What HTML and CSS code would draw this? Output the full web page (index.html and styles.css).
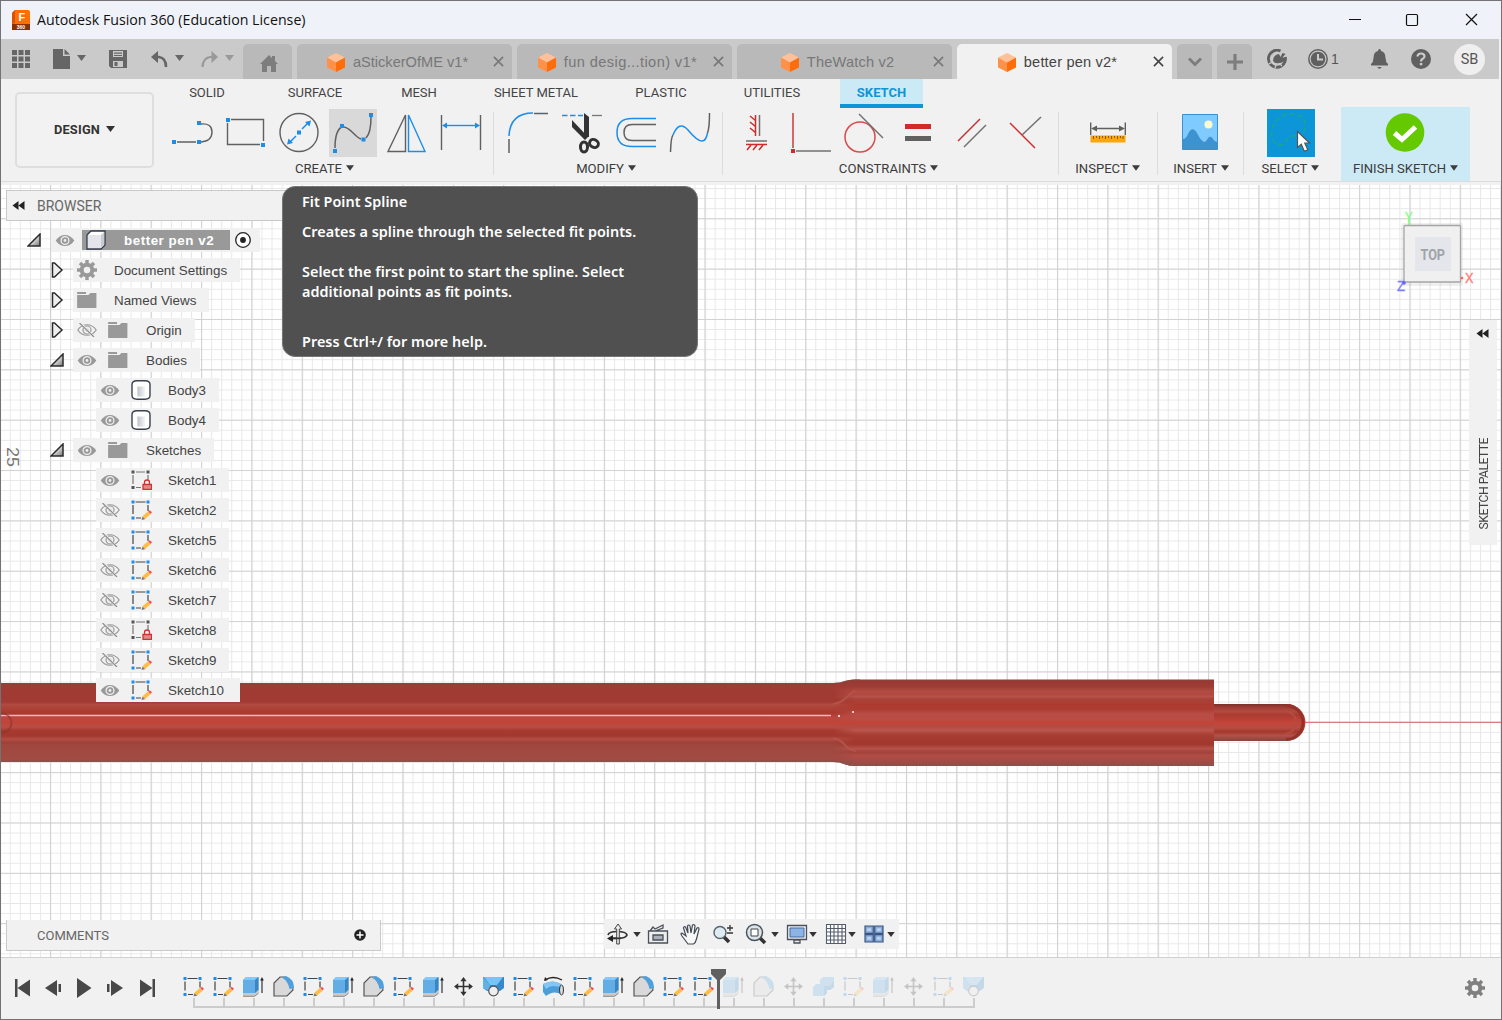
FILE: index.html
```html
<!DOCTYPE html>
<html lang="en">
<head>
<meta charset="utf-8">
<title>Autodesk Fusion 360 (Education License)</title>
<link rel="stylesheet" href="styles.css">
</head>
<body>
<svg class="defs" width="0" height="0">
  <defs>
    <linearGradient id="gTri" x1="0" y1="0" x2="1" y2="1"><stop offset=".3" stop-color="#fff"/><stop offset="1" stop-color="#777"/></linearGradient>
    <linearGradient id="gCyl" x1="0" x2="1" y1="0" y2="0"><stop offset="0" stop-color="#fff"/><stop offset=".1" stop-color="#c3c6d0"/><stop offset="1" stop-color="#f6f6f8"/></linearGradient>
  </defs>
  <symbol id="caret" viewBox="0 0 9 6"><path d="M0 0h9L4.500 6z" fill="currentColor"/></symbol>
  <symbol id="cube" viewBox="0 0 18 19"><path d="M9 0l9 4.500L9 9.500 0 4.500z" fill="#ffc09a"/><path d="M0 4.500l9 5V19l-9-4.500z" fill="#ff9148"/><path d="M18 4.500l-9 5V19l9-4.500z" fill="#ff6c0a"/></symbol>
  <symbol id="close" viewBox="0 0 12 12"><path d="M1 1l10 10M11 1L1 11" stroke="currentColor" stroke-width="1.700" fill="none"/></symbol>
  <symbol id="eye" viewBox="0 0 20 14"><path d="M0 7C5-1 15-1 20 7 15 15 5 15 0 7z" fill="#999"/><circle cx="10" cy="7" r="4.200" fill="none" stroke="#eee" stroke-width="1.400"/><circle cx="10" cy="7" r="1.500" fill="#eee"/></symbol>
  <symbol id="eyeoff" viewBox="0 0 20 14"><path d="M.8 7C5.500 0 14.500 0 19.200 7 14.500 14 5.500 14 .8 7z" fill="none" stroke="#999" stroke-width="1.200"/><circle cx="10" cy="7" r="4" fill="none" stroke="#999" stroke-width="1.200"/><circle cx="10" cy="7" r="1.500" fill="#999"/><path d="M3.500 0l13 14" stroke="#eee" stroke-width="2.400"/><path d="M2.500 0l14.500 14" stroke="#888" stroke-width="1.100"/></symbol>
  <symbol id="folder" viewBox="0 0 21 17"><path d="M0 0h9.500v2H0zM0 3.200h12l2-2.200h6.500v16H0z" fill="#999"/></symbol>
  <symbol id="gear" viewBox="0 0 20 20"><circle cx="10" cy="10" r="5.300" fill="none" stroke="currentColor" stroke-width="4"/><g stroke="currentColor" stroke-width="3.400"><path d="M10 0v4M10 16v4M0 10h4M16 10h4M3 3l2.800 2.800M14.200 14.200L17 17M17 3l-2.800 2.800M5.800 14.200L3 17"/></g></symbol>
  <symbol id="open" viewBox="0 0 14 14"><path d="M13 1v12H1z" fill="url(#gTri)" stroke="#2c2c2c" stroke-width="1.500"/></symbol>
  <symbol id="shut" viewBox="0 0 12 16"><path d="M1.500 1h2L11 8l-7.500 7h-2z" fill="#eee" stroke="#2c2c2c" stroke-width="1.500"/></symbol>
  <symbol id="body" viewBox="0 0 20 20"><path d="M1 4.500Q1 1 6 .8h8q5 .2 5 3.700v11q0 3.500-5 3.700H6q-5-.2-5-3.700z" fill="#fff" stroke="#3b414d" stroke-width="1.400"/><path d="M6 6.500h8v10H6z" fill="url(#gCyl)"/></symbol>
  <symbol id="sketch" viewBox="0 0 21 20"><path d="M4.500 2h10M2 5v9M17 5v6M5 18h5" stroke="#444" stroke-width="1.200" fill="none"/><path d="M0.500.5h3v3h-3zM15.500.5h3v3h-3zM.5 16.500h3v3h-3z" fill="#1c8eea"/><path d="M10.500 20l1-3.500 3 2.600z" fill="#777"/><path d="M11.500 16.300l5.300-4.700 2.700 2.600-5.500 4.700z" fill="#ffbe43"/><path d="M17.200 11.600l1.600-1.400 2.200 2-1.600 1.900z" fill="#fb4b55"/></symbol>
  <symbol id="locked" viewBox="0 0 21 20"><path d="M5 2h9M2 5v9M17 5v5M5 17.500h5" stroke="#777" stroke-width="1.200" fill="none"/><path d="M.5.500h3v3h-3zM15.500.500h3v3h-3zM.5 16h3v3h-3z" fill="#555"/><path d="M13.500 14v-1.500a2.500 2.500 0 0 1 5 0V14" fill="none" stroke="#cf3434" stroke-width="1.300"/><path d="M12 14.500h8.500v5H12z" fill="#e58a8a" stroke="#cf3434" stroke-width="1.300"/></symbol>
  <symbol id="extrude" viewBox="0 0 21 21"><path d="M0 17v3h12l4-3.500v-3z" fill="#c9c9c9"/><path d="M0 20.300h11.500l4-3" fill="none" stroke="#888"/><path d="M0 4l3-3h12.500v12.500L12 17H0z" fill="#63ade6"/><path d="M0 4l3-3h12.500L12 4z" fill="#86c8f8"/><path d="M12 4l3.500-3v12.500L12 17z" fill="#3687c4"/><path d="M19 3v14" stroke="#222" stroke-width="1.100"/><path d="M17.200 4.500L19 1l1.800 3.500z" fill="#222"/></symbol>
  <symbol id="fillet" viewBox="0 0 21 21"><path d="M1 20V7l6-6h5q8 3 8 13l-6 6z" fill="#d9d9d9" stroke="#555" stroke-width="1.200"/><path d="M9 1.500l4-1.500q8 3 8 12l-4.500 1Q15.500 5.500 9 1.500z" fill="#4fa0df"/></symbol>
  <symbol id="move" viewBox="0 0 20 20"><path d="M10 3v14M3 10h14" stroke="#333" stroke-width="1.500" fill="none"/><path d="M10 1l3 4H7zM10 19l-3-4h6zM1 10l4-3v6zM19 10l-4 3V7z" fill="#333"/></symbol>
  <symbol id="loft" viewBox="0 0 21 21"><path d="M0 1h21v11l-4 3H4l-4-3z" fill="#3789c7"/><path d="M1 1h19l-6 8H7z" fill="#7bc3f5"/><path d="M0 1l7 8-1 6-6-3z" fill="#65b0e7"/><circle cx="10.500" cy="15" r="4.800" fill="#eee" stroke="#555" stroke-width="1.200"/></symbol>
  <symbol id="revolve" viewBox="0 0 21 21"><path d="M2 4q8-5 17 0" fill="none" stroke="#222" stroke-width="1.300"/><path d="M1 5l1-4 3 3z" fill="#222"/><path d="M0 8q10-5 18 0v10q-8-4-15 2L0 16z" fill="#4c9eda"/><path d="M0 8q10-5 18 0l-2 3Q8 8 3 13z" fill="#83c6f5"/><ellipse cx="18.500" cy="14" rx="2" ry="5" fill="#ddd" stroke="#333"/></symbol>
  <symbol id="combine" viewBox="0 0 21 21"><path d="M0 11l3-3h4V4l3-3h11v10l-4 3h-3v3l-3 3H0z" fill="#63ade6"/><path d="M11 10h6l4-5v6l-4 3h-3v3l-3 3z" fill="#3b8dcc"/></symbol>
  <symbol id="rewind" viewBox="0 0 12 9"><path d="M6 0v9L0 4.500zM12 0v9L6 4.500z" fill="#222"/></symbol>
</svg>

<div class="window">
  <header class="titlebar">
    <svg class="applogo" width="18" height="20" viewBox="0 0 18 20"><path d="M3 0h13q2 0 2 2v18H0V3z" fill="#ff6d05"/><path d="M0 3l3-3v13l-3 1z" fill="#d65300"/><path d="M0 14h18v6H0z" fill="#8d3000"/><text x="6.500" y="11" font-size="11" font-weight="700" fill="#fff">F</text><text x="4.800" y="19" font-size="5" font-weight="700" fill="#fff">360</text></svg>
    <span class="apptitle">Autodesk Fusion 360 (Education License)</span>
    <svg class="winctl" width="132" height="14" viewBox="0 0 132 14" fill="none" stroke="#111" stroke-width="1.200"><path d="M2 6.500h12M119 1l11 11M130 1l-11 11"/><rect x="59.500" y="1.500" width="11" height="11" rx="1.200"/></svg>
  </header>

  <div class="appbar">
    <div class="quick">
      <svg width="18" height="18" viewBox="0 0 18 18" fill="#666"><path d="M0 0h5v5H0zM6.500 0h5v5h-5zM13 0h5v5h-5zM0 6.500h5v5H0zM6.500 6.500h5v5h-5zM13 6.500h5v5h-5zM0 13h5v5H0zM6.500 13h5v5h-5zM13 13h5v5h-5z"/></svg>
      <svg class="qfile" width="17" height="20" viewBox="0 0 17 20" fill="#666"><path d="M0 0h10v7h7v13H0zM11.500 0L17 5.500h-5.500z"/></svg>
      <svg class="qc" width="9" height="6"><use href="#caret"/></svg>
      <svg class="qsave" width="18" height="18" viewBox="0 0 18 18"><path d="M0 0h18v18H2l-2-2z" fill="#666"/><path d="M4 1h10v6H4zM4 11h10v6H4z" fill="#cacaca"/><path d="M5 2.500h8v1.200H5zM5 5h8v1H5zM5.500 12h3v4h-3z" fill="#666"/></svg>
      <svg class="qundo" width="17" height="17" viewBox="0 0 17 17"><path d="M3 6h5q7 1 7 10" fill="none" stroke="#666" stroke-width="2.600"/><path d="M0 6l7-6v12z" fill="#666"/></svg>
      <svg class="qc" width="9" height="6"><use href="#caret"/></svg>
      <svg class="qredo" width="17" height="17" viewBox="0 0 17 17"><path d="M14 6H9Q2 7 1.500 16" fill="none" stroke="#999" stroke-width="2.200"/><path d="M17 6l-6.500-6v12z" fill="#999"/></svg>
      <svg class="qc dim" width="9" height="6"><use href="#caret"/></svg>
    </div>
    <div class="tabs">
      <div class="tab home"><svg width="18" height="17" viewBox="0 0 18 17"><path d="M9 0l3 3V1h3v5l3 3h-2v8h-5v-6H7v6H2V9H0z" fill="#7d7d7d"/></svg></div>
      <div class="tab"><span class="tname"><svg width="18" height="19"><use href="#cube"/></svg><b>aStickerOfME v1*</b></span><svg width="11" height="11"><use href="#close"/></svg></div>
      <div class="tab"><span class="tname"><svg width="18" height="19"><use href="#cube"/></svg><b class="wide">fun desig...tion) v1*</b></span><svg width="11" height="11"><use href="#close"/></svg></div>
      <div class="tab"><span class="tname"><svg width="18" height="19"><use href="#cube"/></svg><b class="mid">TheWatch v2</b></span><svg width="11" height="11"><use href="#close"/></svg></div>
      <div class="tab active"><span class="tname"><svg width="18" height="19"><use href="#cube"/></svg><b class="mid">better pen v2*</b></span><svg width="11" height="11"><use href="#close"/></svg></div>
      <div class="tab small"><svg width="16" height="10" viewBox="0 0 16 10"><path d="M2 1.500l6 6 6-6" fill="none" stroke="#7d7d7d" stroke-width="3"/></svg></div>
      <div class="tab small"><svg width="16" height="16" viewBox="0 0 16 16"><path d="M8 0v16M0 8h16" stroke="#7d7d7d" stroke-width="3.200"/></svg></div>
    </div>
    <div class="account">
      <svg width="20" height="20" viewBox="0 0 20 20"><path d="M13.500 2A8.500 8.500 0 1 0 18.300 8" fill="none" stroke="#606060" stroke-width="2.800"/><path d="M2 15l3-2M8 19l1-3M15 17l-2-2" stroke="#cacaca" stroke-width="1.300"/><path d="M6 12q0-6 6-7l1.500 3 2-4 3 1-3 3.500 3.500.5q-2 5-7 5-4 1-6-2z" fill="#606060"/></svg>
      <svg class="aclock" width="20" height="20" viewBox="0 0 20 20"><circle cx="10" cy="10" r="9.200" fill="none" stroke="#606060" stroke-width="1.500"/><circle cx="10" cy="10" r="7.300" fill="#606060"/><path d="M10 5v5.500h5" fill="none" stroke="#ccc" stroke-width="2"/></svg>
      <span class="jobs">1</span>
      <svg class="abell" width="17" height="20" viewBox="0 0 17 20"><path d="M8.500 0q1.500 0 1.500 2 4.500 1 4.500 7 0 4 2.500 6v1.500H0V15q2.500-2 2.500-6 0-6 4.500-7 0-2 1.500-2zM6 18h5l-2.500 2z" fill="#606060"/></svg>
      <svg class="ahelp" width="20" height="20" viewBox="0 0 20 20"><circle cx="10" cy="10" r="10" fill="#606060"/><path d="M6.500 7.500q.3-3 3.500-3t3.500 2.700q0 1.600-1.800 2.600Q10 10.800 10 12.500" fill="none" stroke="#ccc" stroke-width="2.200"/><path d="M8.800 14h2.500v2.300H8.800z" fill="#ccc"/></svg>
      <span class="avatar">SB</span>
    </div>
  </div>

  <div class="ribbon">
    <button class="workspace">DESIGN <svg width="9" height="6"><use href="#caret"/></svg></button>
    <div class="ribmain">
      <nav class="rtabs"><span class="w82">SOLID</span><span class="w134">SURFACE</span><span class="w74">MESH</span><span class="w160">SHEET METAL</span><span class="w90">PLASTIC</span><span class="w132">UTILITIES</span><span class="current">SKETCH</span></nav>
      <div class="groups">
        <section class="group create">
          <div class="icons">
            <svg width="48" height="48" viewBox="0 0 48 48"><g fill="none" stroke="#606060" stroke-width="1.400"><path d="M10 33h19M34 33q11-1 11-10T34 15"/></g><path d="M5 31h4v4H5zM30 31h4v4h-4zM30 12h4v4h-4z" fill="#1c8eea"/></svg>
            <svg width="48" height="48" viewBox="0 0 48 48"><path d="M6.500 14v21.500H39M42.500 32V10.500H10" fill="none" stroke="#606060" stroke-width="1.400"/><path d="M5 9h4v4H5zM40 34h4v4h-4z" fill="#1c8eea"/></svg>
            <svg width="48" height="48" viewBox="0 0 48 48"><circle cx="24" cy="23.500" r="19" fill="none" stroke="#606060" stroke-width="1.400"/><path d="M15 33l6-6M27 20l6-6" stroke="#1c8eea" stroke-width="1.500"/><path d="M12 35.500l1.500-6 4.500 4.500zM36 11.500l-6 1.500 4.500 4.500zM22 21.500h4v4h-4z" fill="#1c8eea"/></svg>
            <svg class="picked" width="48" height="48" viewBox="0 0 48 48"><path d="M6 39Q6 22 12.500 18M15 18c7 1 11 10 17 12M37 29q5-5 5-21" fill="none" stroke="#606060" stroke-width="1.500"/><path d="M4 40h4v4H4zM11 15h4v4h-4zM32.500 28.500h4v4h-4zM40 4h4v4h-4z" fill="#1c8eea"/></svg>
            <svg width="48" height="48" viewBox="0 0 48 48" fill="none" stroke-width="1.400"><path d="M22.500 6v36.500H5z" stroke="#606060"/><path d="M25.500 6v36.500H42z" stroke="#1c8eea"/></svg>
            <svg width="48" height="48" viewBox="0 0 48 48"><path d="M4.500 6v35M43.500 6v35" stroke="#606060" stroke-width="1.400"/><path d="M8 16.500h32" stroke="#1c8eea" stroke-width="1.400"/><path d="M5 16.500l5-3v6zM43 16.500l-5-3v6z" fill="#1c8eea"/></svg>
          </div>
          <div class="label">CREATE <svg width="9" height="6"><use href="#caret"/></svg></div>
        </section>
        <section class="group modify">
          <div class="icons">
            <svg width="48" height="48" viewBox="0 0 48 48" fill="none" stroke-width="1.500"><path d="M5 27Q6 4 29 4" stroke="#1c8eea"/><path d="M5 30v14M30 4.500h14" stroke="#606060"/></svg>
            <svg width="48" height="48" viewBox="0 0 48 48"><path d="M4 6.500h21" stroke="#1c8eea" stroke-width="1.500" stroke-dasharray="5.500 2.500"/><path d="M34 6.500h10" stroke="#777" stroke-width="1.300"/><path d="M26 4l5 4v20h-5zM14 11l16 17-3 3-13-13z" fill="#333"/><g fill="none" stroke="#333" stroke-width="3"><ellipse cx="26" cy="38" rx="3.500" ry="5"/><ellipse cx="36" cy="34.500" rx="4.600" ry="3.800" transform="rotate(30 36 34.500)"/></g></svg>
            <svg width="48" height="48" viewBox="0 0 48 48" fill="none" stroke-width="1.500"><path d="M44 9.500H20q-15 0-15 14t15 14h24" stroke="#1c8eea"/><path d="M44 15.500H20q-8 0-8 8t8 8h24" stroke="#606060"/></svg>
            <svg width="48" height="48" viewBox="0 0 48 48" fill="none" stroke-width="1.500"><path d="M4.500 43Q5 28 7 26M43.500 4q0 15-2 20" stroke="#606060"/><path d="M7 26q6-15 15-5 9 11 14 11 4 0 5.500-8" stroke="#1c8eea"/></svg>
          </div>
          <div class="label">MODIFY <svg width="9" height="6"><use href="#caret"/></svg></div>
        </section>
        <section class="group constraints">
          <div class="icons">
            <svg width="48" height="48" viewBox="0 0 48 48" fill="none" stroke-width="1.500"><path d="M23.500 6v21M24 12l-6-5M24 18l-6-5M24 24l-6-5M14 35.500h21M19 36l-4 5M25 36l-4 5M31 36l-4 5" stroke="#cf2b2b"/><path d="M27.500 6v21M14 32h21" stroke="#707070"/></svg>
            <svg width="48" height="48" viewBox="0 0 48 48"><path d="M7 4v35" stroke="#cf2b2b" stroke-width="1.400"/><path d="M10 42h35" stroke="#707070" stroke-width="1.400"/><path d="M5 40h4v4H5z" fill="#cf2b2b"/></svg>
            <svg width="48" height="48" viewBox="0 0 48 48" fill="none" stroke-width="1.500"><circle cx="20" cy="28" r="15" stroke="#d84b4b"/><path d="M19 5l24 24" stroke="#707070"/></svg>
            <svg width="48" height="48" viewBox="0 0 48 48"><path d="M11 15h26v5H11z" fill="#d12a2a"/><path d="M11 27h26v5H11z" fill="#606060"/></svg>
            <svg width="48" height="48" viewBox="0 0 48 48" fill="none" stroke-width="1.500"><path d="M10 32L32 10" stroke="#d12a2a"/><path d="M16 38l22-22" stroke="#707070"/></svg>
            <svg width="48" height="48" viewBox="0 0 48 48" fill="none" stroke-width="1.500"><path d="M8 14l25 25" stroke="#d12a2a"/><path d="M20 26L39 8" stroke="#707070"/></svg>
          </div>
          <div class="label">CONSTRAINTS <svg width="9" height="6"><use href="#caret"/></svg></div>
        </section>
        <section class="group inspect">
          <div class="icons"><svg width="48" height="48" viewBox="0 0 48 48"><path d="M6.700 13.500V26M41.300 13.500V26M10 19.500h28" stroke="#606060" stroke-width="1.400"/><path d="M7 19.500l6-3v6zM41 19.500l-6-3v6z" fill="#606060"/><path d="M6.500 26.500h35v7h-35z" fill="#faa70f"/><path d="M9.500 27v3M12.500 27v2M15.500 27v3M18.500 27v2M21.500 27v3M24.500 27v2M27.500 27v3M30.500 27v2M33.500 27v3M36.500 27v2M39 27v3" stroke="#8b5c05"/></svg></div>
          <div class="label">INSPECT <svg width="9" height="6"><use href="#caret"/></svg></div>
        </section>
        <section class="group insert">
          <div class="icons"><svg width="48" height="48" viewBox="0 0 48 48"><path d="M6.500 5.500h35v35h-35z" fill="#7fcaff" stroke="#3d90cc"/><path d="M7 30q3 0 5-5 4-9 9-1 4 8 7 9 2 0 4-4 3-3 5 1 2 3 4 3v7H7z" fill="#3d92d0"/><circle cx="32.500" cy="15.500" r="4" fill="#fdfbd0"/></svg></div>
          <div class="label">INSERT <svg width="9" height="6"><use href="#caret"/></svg></div>
        </section>
        <section class="group select">
          <div class="icons"><svg class="blue" width="48" height="48" viewBox="0 0 48 48"><path d="M29 27c-12-1-8 9-17 9-9-2-10-17-2-25C18 2 37 3 38 15q1 6-3 10" fill="none" stroke="#1fa97b" stroke-width="1.300" stroke-dasharray="5 3"/><path d="M30.500 22.500v16l3.800-3.300 3 7 3.500-1.500-3-6.700h4.700z" fill="#fff" stroke="#555" stroke-width="1.200"/></svg></div>
          <div class="label">SELECT <svg width="9" height="6"><use href="#caret"/></svg></div>
        </section>
        <section class="group finish">
          <div class="icons"><svg width="48" height="48" viewBox="0 0 48 48"><circle cx="24" cy="23.500" r="19.300" fill="#65c900"/><path d="M13.500 24l7.500 6.500L34.500 18" fill="none" stroke="#fff" stroke-width="5"/></svg></div>
          <div class="label">FINISH SKETCH <svg width="9" height="6"><use href="#caret"/></svg></div>
        </section>
      </div>
    </div>
  </div>

  <main class="canvas">
    <svg class="scene" width="1500" height="772" viewBox="1 185 1500 772">
      <defs>
        <pattern id="minor" patternUnits="userSpaceOnUse" x="50" y="218.300" width="10.070" height="10.070"><path d="M.5 0v10.070M0 .5h10.070" stroke="#e7e7e7" fill="none"/></pattern>
        <pattern id="major" patternUnits="userSpaceOnUse" x="50" y="218.300" width="50.350" height="50.350"><path d="M.5 0v50.350M0 .5h50.350" stroke="#d2d2d2" stroke-width="1.200" fill="none"/></pattern>
        <linearGradient id="thin" gradientUnits="userSpaceOnUse" x1="0" x2="0" y1="683" y2="762">
          <stop offset="0" stop-color="#87453f"/><stop offset=".03" stop-color="#a03c34"/><stop offset=".24" stop-color="#a03a32"/><stop offset=".27" stop-color="#b04a40"/><stop offset=".38" stop-color="#aa382e"/><stop offset=".43" stop-color="#b9473e"/><stop offset=".5" stop-color="#c0453a"/><stop offset=".56" stop-color="#b74d44"/><stop offset=".6" stop-color="#a8392e"/><stop offset=".67" stop-color="#a2382e"/><stop offset=".71" stop-color="#b34e45"/><stop offset=".75" stop-color="#9f4138"/><stop offset=".8" stop-color="#a0483f"/><stop offset=".97" stop-color="#a24b43"/><stop offset="1" stop-color="#805550"/>
        </linearGradient>
        <linearGradient id="thick" gradientUnits="userSpaceOnUse" x1="0" x2="0" y1="679" y2="766">
          <stop offset="0" stop-color="#87453f"/><stop offset=".03" stop-color="#993a32"/><stop offset=".09" stop-color="#9d3d35"/><stop offset=".14" stop-color="#b34b42"/><stop offset=".18" stop-color="#b04a41"/><stop offset=".2" stop-color="#b8524a"/><stop offset=".23" stop-color="#a7443b"/><stop offset=".29" stop-color="#ad3a2f"/><stop offset=".35" stop-color="#ac3d33"/><stop offset=".4" stop-color="#b84d45"/><stop offset=".47" stop-color="#b94c43"/><stop offset=".5" stop-color="#c34439"/><stop offset=".55" stop-color="#b54a41"/><stop offset=".59" stop-color="#bb564e"/><stop offset=".64" stop-color="#a83e34"/><stop offset=".75" stop-color="#a2372c"/><stop offset=".8" stop-color="#b5534b"/><stop offset=".84" stop-color="#a2423a"/><stop offset=".88" stop-color="#b04c44"/><stop offset=".97" stop-color="#9d4b45"/><stop offset="1" stop-color="#805550"/>
        </linearGradient>
        <linearGradient id="tip" gradientUnits="userSpaceOnUse" x1="0" x2="0" y1="704" y2="741">
          <stop offset="0" stop-color="#7b302a"/><stop offset=".1" stop-color="#a23e35"/><stop offset=".2" stop-color="#b14a40"/><stop offset=".3" stop-color="#ac3a30"/><stop offset=".5" stop-color="#c2463b"/><stop offset=".65" stop-color="#b84b41"/><stop offset=".75" stop-color="#a5382d"/><stop offset=".85" stop-color="#b25047"/><stop offset="1" stop-color="#87453f"/>
        </linearGradient>
        <linearGradient id="fade" gradientUnits="userSpaceOnUse" x1="833" x2="856" y1="0" y2="0"><stop offset="0" stop-color="#000"/><stop offset="1" stop-color="#fff"/></linearGradient>
        <mask id="blend" maskUnits="userSpaceOnUse" x="820" y="670" width="400" height="110"><rect x="820" y="670" width="400" height="110" fill="url(#fade)"/></mask>
        <clipPath id="outline"><path d="M0 683h834q6 0 11-2 4-1.500 10-1.500h359v86.500H855q-6 0-11-2-5-2-10-2H0z"/></clipPath>
      </defs>
      <rect x="1" y="185" width="1500" height="772" fill="#fff"/>
      <rect x="1" y="185" width="1500" height="772" fill="url(#minor)"/>
      <rect x="1" y="185" width="1500" height="772" fill="url(#major)"/>
      <path d="M1300 722.300h201" stroke="#dc6464"/>
      <path d="M1213 704h74a18.500 18.500 0 0 1 0 37h-74z" fill="url(#tip)"/>
      <path d="M1286 705.500a17 17 0 0 1 0 34" fill="none" stroke="#943229" stroke-width="3"/>
      <path d="M1285 711q11 2 11 11.500T1285 734" fill="none" stroke="#b44c42" stroke-width="2"/>
      <g clip-path="url(#outline)">
        <rect y="679" width="860" height="87" fill="url(#thin)"/>
        <rect x="830" y="679" width="384" height="87" fill="url(#thick)" mask="url(#blend)"/>
        <path d="M833 704q8-1 13-6t9-7M833 738q8 2 12 7t11 6" fill="none" stroke="#b5524a" stroke-width="2"/>
        <path d="M833 679h22q-8 1-22 5zM833 766h22q-8-1-22-5z" fill="#8e3c35"/>
      </g>
      <path d="M1 722.300h1300" stroke="#cc4036" opacity=".7"/>
      <path d="M1 715.500h830" stroke="#e8bdb7" stroke-width="1.400"/>
      <path d="M838 715h2v2h-2zM852 711h2v2h-2z" fill="#f0cdc8"/>
      <circle cx="2" cy="723" r="9.500" fill="none" stroke="#8a352e" stroke-width="2" opacity=".6"/>
      <text class="axis" transform="translate(6.500 447) rotate(90)" textLength="20" lengthAdjust="spacingAndGlyphs">25</text>
    </svg>

    <aside class="browser">
      <div class="bhead"><svg width="13" height="9"><use href="#rewind"/></svg>BROWSER</div>
      <ul class="tree">
        <li class="l0"><svg class="tw" width="14" height="14"><use href="#open"/></svg><div class="row"><svg width="20" height="13"><use href="#eye"/></svg><span class="rootname"><svg width="20" height="20" viewBox="0 0 20 20"><path d="M1 5l4-4h14v14l-4 4H1z" fill="#fff" stroke="#333a48" stroke-width="1.300"/><path d="M2 5h13v13H2z" fill="#e4e5ea"/><path d="M15 5l3-3v13l-3 3z" fill="#c9cad2"/></svg>better pen v2</span><svg class="radio" width="18" height="18" viewBox="0 0 18 18"><circle cx="9" cy="9" r="7.300" fill="#fff" stroke="#222" stroke-width="1.300"/><circle cx="9" cy="9" r="2.900" fill="#222"/></svg></div></li>
        <li class="l1"><svg class="tw" width="14" height="16"><use href="#shut"/></svg><div class="row"><svg class="gearic" width="20" height="20"><use href="#gear"/></svg><span class="n1">Document Settings</span></div></li>
        <li class="l1"><svg class="tw" width="14" height="16"><use href="#shut"/></svg><div class="row"><svg width="20" height="16"><use href="#folder"/></svg><span class="n1">Named Views</span></div></li>
        <li class="l1"><svg class="tw" width="14" height="16"><use href="#shut"/></svg><div class="row"><svg width="20" height="14"><use href="#eyeoff"/></svg><svg class="second" width="20" height="16"><use href="#folder"/></svg><span>Origin</span></div></li>
        <li class="l1"><svg class="tw" width="14" height="14"><use href="#open"/></svg><div class="row"><svg width="20" height="13"><use href="#eye"/></svg><svg class="second" width="20" height="16"><use href="#folder"/></svg><span>Bodies</span></div></li>
        <li class="l2"><div class="row"><svg width="20" height="13"><use href="#eye"/></svg><svg class="second" width="20" height="20"><use href="#body"/></svg><span>Body3</span></div></li>
        <li class="l2"><div class="row"><svg width="20" height="13"><use href="#eye"/></svg><svg class="second" width="20" height="20"><use href="#body"/></svg><span>Body4</span></div></li>
        <li class="l1"><svg class="tw" width="14" height="14"><use href="#open"/></svg><div class="row"><svg width="20" height="13"><use href="#eye"/></svg><svg class="second" width="20" height="16"><use href="#folder"/></svg><span>Sketches</span></div></li>
        <li class="l2 sk"><div class="row"><svg width="20" height="13"><use href="#eye"/></svg><svg class="second" width="21" height="20"><use href="#locked"/></svg><span>Sketch1</span></div></li>
        <li class="l2 sk"><div class="row"><svg width="20" height="14"><use href="#eyeoff"/></svg><svg class="second" width="21" height="20"><use href="#sketch"/></svg><span>Sketch2</span></div></li>
        <li class="l2 sk"><div class="row"><svg width="20" height="14"><use href="#eyeoff"/></svg><svg class="second" width="21" height="20"><use href="#sketch"/></svg><span>Sketch5</span></div></li>
        <li class="l2 sk"><div class="row"><svg width="20" height="14"><use href="#eyeoff"/></svg><svg class="second" width="21" height="20"><use href="#sketch"/></svg><span>Sketch6</span></div></li>
        <li class="l2 sk"><div class="row"><svg width="20" height="14"><use href="#eyeoff"/></svg><svg class="second" width="21" height="20"><use href="#sketch"/></svg><span>Sketch7</span></div></li>
        <li class="l2 sk"><div class="row"><svg width="20" height="14"><use href="#eyeoff"/></svg><svg class="second" width="21" height="20"><use href="#locked"/></svg><span>Sketch8</span></div></li>
        <li class="l2 sk"><div class="row"><svg width="20" height="14"><use href="#eyeoff"/></svg><svg class="second" width="21" height="20"><use href="#sketch"/></svg><span>Sketch9</span></div></li>
        <li class="l2 sk last"><div class="row"><svg width="20" height="13"><use href="#eye"/></svg><svg class="second" width="21" height="20"><use href="#sketch"/></svg><span>Sketch10</span></div></li>
      </ul>
    </aside>

    <div class="tooltip">
      <h2>Fit Point Spline</h2>
      <p>Creates a spline through the selected fit points.</p>
      <p>Select the first point to start the spline. Select<br>additional points as fit points.</p>
      <p class="more">Press Ctrl+/ for more help.</p>
    </div>

    <svg class="viewcube" width="84" height="90" viewBox="1394 206 84 90">
      <path d="M1409 218v8" stroke="#8fff8f" stroke-width="1.500"/>
      <rect x="1401" y="223" width="62" height="63" rx="3" fill="#999" opacity=".16"/>
      <rect x="1404" y="225.500" width="56.500" height="56.500" rx="1" fill="#f0f0f0" stroke="#a5a5a5" stroke-width="1.300"/>
      <rect x="1415" y="237" width="36" height="34" fill="#e4e6eb"/>
      <text class="cubetop" x="1420.500" y="259.500" textLength="24.500" lengthAdjust="spacingAndGlyphs">TOP</text>
      <text class="ax" x="1405" y="221.500" textLength="7.500" lengthAdjust="spacingAndGlyphs" fill="#7dff7d" stroke="#7dff7d">Y</text>
      <text class="ax" x="1465" y="283" textLength="8.500" lengthAdjust="spacingAndGlyphs" fill="#ff7d7d" stroke="#ff7d7d">X</text>
      <text class="ax" x="1397" y="291" textLength="8" lengthAdjust="spacingAndGlyphs" fill="#7d7dff" stroke="#7d7dff">Z</text>
      <circle cx="1404" cy="283" r="1.800" fill="#6464ff"/><circle cx="1462" cy="278" r="1.300" fill="#ff6464"/>
    </svg>

    <aside class="palette"><svg width="13" height="9"><use href="#rewind"/></svg><span>SKETCH PALETTE</span></aside>

    <div class="comments">COMMENTS <svg width="12" height="12" viewBox="0 0 12 12"><circle cx="6" cy="6" r="5.800" fill="#222"/><path d="M6 2.500v7M2.500 6h7" stroke="#fff" stroke-width="1.500"/></svg></div>

    <div class="navbar">
      <svg width="22" height="22" viewBox="0 0 22 22"><path d="M1 12q1-3.500 9-3.500 9 0 10 3.500-1 3-8 3.300H4" fill="none" stroke="#333" stroke-width="1.700"/><path d="M9.700 21V6H7.500L11 1l3.500 5h-2.200v15z" fill="#eee" stroke="#444"/><path d="M4 15.300h10" stroke="#333" stroke-width="1.700"/><path d="M0 15.500L6 12v7z" fill="#222"/></svg>
      <svg class="c4" width="8" height="5"><use href="#caret"/></svg>
      <svg class="m6" width="22" height="22" viewBox="0 0 22 22" fill="#eee" stroke="#4b505a" stroke-width="1.300"><path d="M1.500 8h19v12h-19zM3 8l3-4 2 2 8-4v3l-8 3"/><path d="M6 12h10v5H6z" fill="#aab0b9"/></svg>
      <svg class="m11" width="22" height="22" viewBox="0 0 22 22"><path d="M8 21L2 13q-2-3 0-3l4 3L3.500 5Q4 3 5.500 4L8 10 7.500 3q1-2 2.500 0l1 7 1.500-8q2-1 2.500 1l-1 8 3-6q2-1 2 1l-2.500 10q-1 4-3 5z" fill="#f8f8f8" stroke="#444b55" stroke-width="1.200"/></svg>
      <svg class="m10" width="22" height="22" viewBox="0 0 22 22"><path d="M12 14l5 5" stroke="#333" stroke-width="3.500"/><circle cx="8" cy="9.500" r="6" fill="#dcecf2" stroke="#59616b" stroke-width="1.400"/><path d="M15 5h6M18 2v6M15 10h6" stroke="#333" stroke-width="1.300"/></svg>
      <svg class="m11" width="22" height="22" viewBox="0 0 22 22"><path d="M15 15l5 5" stroke="#333" stroke-width="3.500"/><circle cx="9.500" cy="9.500" r="8" fill="#dce5e9" stroke="#4b535d" stroke-width="1.500"/><path d="M6 6h7v7H6z" fill="#fff" stroke="#444"/></svg>
      <svg class="c4" width="8" height="5"><use href="#caret"/></svg>
      <svg class="m7" width="22" height="22" viewBox="0 0 22 22"><path d="M1.500 2.500h19v14h-19zM8 17h6v3H8z" fill="#eee" stroke="#4b505a" stroke-width="1.300"/><path d="M4 5h14v9H4z" fill="#8cb5e6" stroke="#466ba0"/></svg>
      <svg class="c1" width="8" height="5"><use href="#caret"/></svg>
      <svg class="m8" width="22" height="22" viewBox="0 0 22 22"><path d="M1.500 1.500h19v19h-19z" fill="#fff"/><path d="M1.500 1.500h19v19h-19zM5.500 2v18M9 2v18M13 2v18M17 2v18M2 5.500h18M2 9h18M2 13h18M2 17h18" fill="none" stroke="#555d6c" stroke-width="1.100"/></svg>
      <svg class="c1" width="8" height="5"><use href="#caret"/></svg>
      <svg class="m7" width="22" height="22" viewBox="0 0 22 22"><path d="M2 3h8.300v7.300H2zM11.700 3H20v7.300h-8.300zM2 11.700h8.300V19H2zM11.700 11.700H20V19h-8.300z" fill="#87abd8" stroke="#3b5482" stroke-width="1.200"/><path d="M4.200 5.200h4v3h-4zM13.800 5.200h4v3h-4zM4.200 13.800h4v3h-4zM13.800 13.800h4v3h-4z" fill="#b9d2ef"/></svg>
      <svg class="c2" width="8" height="5"><use href="#caret"/></svg>
    </div>
  </main>

  <footer class="timeline">
    <svg class="player" width="142" height="20" viewBox="0 0 142 20" fill="#484848"><path d="M0 1h2.500v18H0zM2.500 10L15 1.500v17zM30 10l12-8v16zM43.500 6h2.500v8h-2.500zM62 0l14.500 10L62 20zM92 6h2.500v8H92zM96 2l12 8-12 8zM125 1.500L137.500 10 125 18.500zM137.500 1h2.500v18h-2.500z"/></svg>
    <ol class="steps">
      <li><svg><use href="#sketch"/></svg></li><li><svg><use href="#sketch"/></svg></li><li><svg><use href="#extrude"/></svg></li><li><svg><use href="#fillet"/></svg></li><li><svg><use href="#sketch"/></svg></li><li><svg><use href="#extrude"/></svg></li><li><svg><use href="#fillet"/></svg></li><li><svg><use href="#sketch"/></svg></li><li><svg><use href="#extrude"/></svg></li><li><svg><use href="#move"/></svg></li><li><svg><use href="#loft"/></svg></li><li><svg><use href="#sketch"/></svg></li><li><svg><use href="#revolve"/></svg></li><li><svg><use href="#sketch"/></svg></li><li><svg><use href="#extrude"/></svg></li><li><svg><use href="#fillet"/></svg></li><li><svg><use href="#sketch"/></svg></li><li><svg><use href="#sketch"/></svg><i class="marker"></i></li><li class="off"><svg><use href="#extrude"/></svg></li><li class="off"><svg><use href="#fillet"/></svg></li><li class="off"><svg><use href="#move"/></svg></li><li class="off"><svg><use href="#combine"/></svg></li><li class="off"><svg><use href="#sketch"/></svg></li><li class="off"><svg><use href="#extrude"/></svg></li><li class="off"><svg><use href="#move"/></svg></li><li class="off"><svg><use href="#sketch"/></svg></li><li class="off"><svg><use href="#loft"/></svg></li>
    </ol>
    <svg class="settings" width="20" height="20"><use href="#gear"/></svg>
  </footer>
</div>
</body>
</html>
```
FILE: styles.css
```css
* { box-sizing: border-box; }
body { margin: 0; font-family: "Liberation Sans", sans-serif; color: #444; }
svg { display: block; flex: none; }
.defs { position: absolute; }
.window { width: 1502px; height: 1020px; border: 1px solid #757275; display: flex; flex-direction: column; background: #f1f1f1; overflow: hidden; }

.titlebar { height: 38px; background: #eff3f9; display: flex; align-items: center; padding: 0 22px 0 11px; flex: none; }
.applogo { font-family: "Liberation Sans", sans-serif; }
.apptitle { margin: -2px 0 0 7px; font: 14.2px "Open Sans", sans-serif; color: #111; letter-spacing: .01px; white-space: nowrap; }
.winctl { margin-left: auto; }

.appbar { height: 40px; background: #cacaca; display: flex; flex: none; margin-right: 2px; }
.quick { width: 242px; display: flex; align-items: center; padding-left: 11px; color: #666; flex: none; }
.qfile { margin-left: 23px; }
.qc { margin: 0 0 2px 7px; }
.qsave { margin-left: 23px; }
.qundo { margin-left: 24px; }
.qredo { margin-left: 17px; }
.quick .dim { color: #999; }
.tabs { display: flex; align-items: flex-end; gap: 5px; }
.tab { width: 215px; height: 35px; border-radius: 5px 5px 0 0; background: #b9b9b9; display: flex; align-items: center; padding-right: 8px; color: #777; }
.tab.home { width: 49px; justify-content: center; padding: 4px 0 0 3px; }
.tab.small { width: 35px; justify-content: center; padding: 0; }
.tab.active { background: #f1f1f1; color: #444; }
.tname { flex: 1; display: flex; align-items: center; justify-content: center; gap: 8px; padding-left: 4px; margin-right: -1px; padding-top: 1px; }
.tname b { font-weight: 400; font-size: 14.6px; white-space: nowrap; }
.tname .wide { letter-spacing: .4px; }
.tname .mid { letter-spacing: .18px; }
.account { display: flex; align-items: center; padding-left: 15px; color: #555; }
.aclock { margin-left: 21px; }
.jobs { width: 14px; margin-left: 3px; font-size: 14px; }
.abell { margin-left: 26px; }
.ahelp { margin-left: 23px; }
.avatar { width: 31px; height: 31px; margin-left: 23px; border-radius: 50%; background: #efefef; font: 14.500px/31px "Roboto", sans-serif; text-align: center; color: #555; }

.ribbon { height: 103px; display: flex; flex: none; border-bottom: 1px solid #dcdcdc; }
.workspace { margin: 13px 12px 13px 14px; width: 139px; height: 76px; border: 2px solid #dedede; border-radius: 5px; background: #f2f2f2; display: flex; align-items: center; justify-content: center; gap: 6px; font: 700 12.8px "Roboto", sans-serif; letter-spacing: .2px; color: #333; padding: 0 0 2px; }
.ribmain { display: flex; flex-direction: column; font: 13px "Roboto", sans-serif; }
.rtabs { display: flex; height: 28px; line-height: 28px; text-align: center; }
.w82 { width: 82px; } .w134 { width: 134px; } .w74 { width: 74px; } .w160 { width: 160px; } .w90 { width: 90px; } .w132 { width: 132px; }
.current { width: 83px; margin-left: 2px; background: #cce9f6; border-bottom: 4px solid #0c96d8; color: #0c96d8; font-weight: 700; font-size: 13px; height: 29px; }
.groups { display: flex; height: 74px; margin-left: -11px; }
.group { display: flex; flex-direction: column; align-items: center; padding-top: 2px; background: linear-gradient(#dcdcdc, #dcdcdc) right 5px / 1.500px 63px no-repeat; }
.icons { display: flex; gap: 6px; }
.create { width: 339px; } .modify { width: 229px; } .constraints { width: 336px; } .inspect { width: 99px; } .insert { width: 86px; }
.create .icons { margin-left: 2px; }
.modify .icons { margin-left: 1px; }
.constraints .icons { margin-right: 1px; }
.modify .label { margin-right: 5px; }
.constraints .label { margin-right: 5px; }
.select { width: 93px; background: none; }
.inspect .icons, .inspect .label { margin-right: 2px; }
.insert .icons { margin-right: 3px; }
.finish { width: 129px; margin-left: 4px; background: #cce9f6; }
.finish .icons { margin-right: 2px; }
.label { height: 22px; display: flex; align-items: center; gap: 4px; font-size: 13.1px; white-space: nowrap; color: #3c3c3c; }
.label svg { width: 8px; height: 6px; }
.picked { background: #d9d9d9; }
.blue { background: #0c96d8; }

.canvas { position: relative; height: 775px; flex: none; padding-top: 3px; }
.axis { font: 17px "Liberation Sans", sans-serif; fill: #777; }
.browser { position: absolute; left: 5px; top: 8px; width: 300px; }
.bhead { height: 31px; border: 1px solid #c9c9c9; background: #f1f1f1; display: flex; align-items: center; gap: 12px; padding-left: 5px; font: 14px "Roboto", sans-serif; color: #666; }
.tree { list-style: none; margin: 4px 0 0; padding: 0; font-size: 13.4px; }
.tree li { height: 30px; display: flex; align-items: center; }
.l0 { padding-left: 21px; } .l1 { padding-left: 44px; } .l2 { padding-left: 90px; }
.row { height: 24px; background: #f1f1f1; display: flex; align-items: center; padding: 0 13px 0 4px; white-space: nowrap; }
.l0 .row { margin-left: 10px; padding-right: 8px; }
.l1 .row { margin-left: 9px; }
.second { margin-left: 11px; }
.row > span { margin-left: 18px; }
.row > .n1 { margin-left: 17px; }
.l2 .row > span { margin-left: 17px; }
.sk .row { width: 133px; }
.sk.last .row { width: 144px; }
.sk .row > span { margin-left: 16px; }
.gearic { color: #999; }
.row > .rootname { margin-left: 7px; height: 20px; width: 148px; background: #999; color: #fff; font-weight: 700; letter-spacing: .52px; display: flex; align-items: center; gap: 18px; padding-left: 4px; }
.radio { margin-left: 4px; }

.tooltip { position: absolute; left: 281px; top: 4px; width: 416px; height: 171px; border-radius: 13px; background: #505050; border: 1px solid #777; padding: 5px 19px; font: 600 14.4px/20px "Noto Sans", sans-serif; letter-spacing: .04px; color: #fff; white-space: nowrap; }
.tooltip h2 { font: inherit; margin: 0 0 10px; }
.tooltip p { margin: 0 0 20px; }
.tooltip .more { margin-top: 30px; }
.viewcube { position: absolute; left: 1393px; top: 24px; }
.cubetop { font: 700 14.5px "Roboto", sans-serif; fill: #a0a3a8; }
.ax { font: 14.5px "Liberation Sans", sans-serif; stroke-width: .4px; }
.palette { position: absolute; left: 1468px; top: 138px; width: 28px; height: 225px; background: #f1f1f1; display: flex; flex-direction: column; justify-content: space-between; align-items: center; padding: 9px 0 16px; font: 12.2px "Roboto", sans-serif; letter-spacing: -.52px; }
.palette svg { margin-right: 2px; }
.palette span { writing-mode: vertical-rl; transform: rotate(180deg); white-space: nowrap; margin-left: 2px; }
.comments { position: absolute; left: 5px; top: 738px; width: 375px; height: 31px; border: 1px solid #c9c9c9; border-top: 0; background: #f1f1f1; display: flex; align-items: center; justify-content: space-between; padding: 0 14px 0 30px; font: 13px "Roboto", sans-serif; color: #666; }
.navbar { position: absolute; left: 603px; top: 737px; width: 295px; height: 30px; background: #f1f1f1; display: flex; align-items: center; padding-left: 3px; color: #333; }
.m6 { margin-left: 6px; } .m7 { margin-left: 7px; } .m8 { margin-left: 8px; } .m10 { margin-left: 10px; } .m11 { margin-left: 11px; }
.c1 { margin-left: 1px; } .c2 { margin-left: 2px; } .c4 { margin-left: 4px; }

.timeline { height: 62px; display: flex; flex: none; border-top: 1px solid #d0d0d0; background: #f1f1f1; padding-right: 16px; }
.player { margin: 20px 0 0 14px; }
.steps { list-style: none; display: flex; margin: 0 0 0 23px; padding: 17px 0 0; }
.steps li { width: 30px; height: 33px; position: relative; padding: 1px 0 0 3px; border-bottom: 2px solid #ccc; background: linear-gradient(#ccc, #ccc) 13px 100% / 2px 8px no-repeat; }
.steps li:first-child { border-image: linear-gradient(90deg, transparent 13px, #ccc 13px) 2; }
.steps li:last-child { border-image: linear-gradient(90deg, #ccc 15px, transparent 15px) 2; }
.steps svg { width: 21px; height: 21px; }
.off svg { opacity: .23; }
.marker { position: absolute; left: 21px; top: -6px; width: 15px; height: 40px; z-index: 1; background: #606060; clip-path: polygon(0 0, 100% 0, 100% 5px, 9px 11px, 9px 100%, 6px 100%, 6px 11px, 0 5px); }
.settings { margin: 20px 0 0 auto; color: #808080; }
```
